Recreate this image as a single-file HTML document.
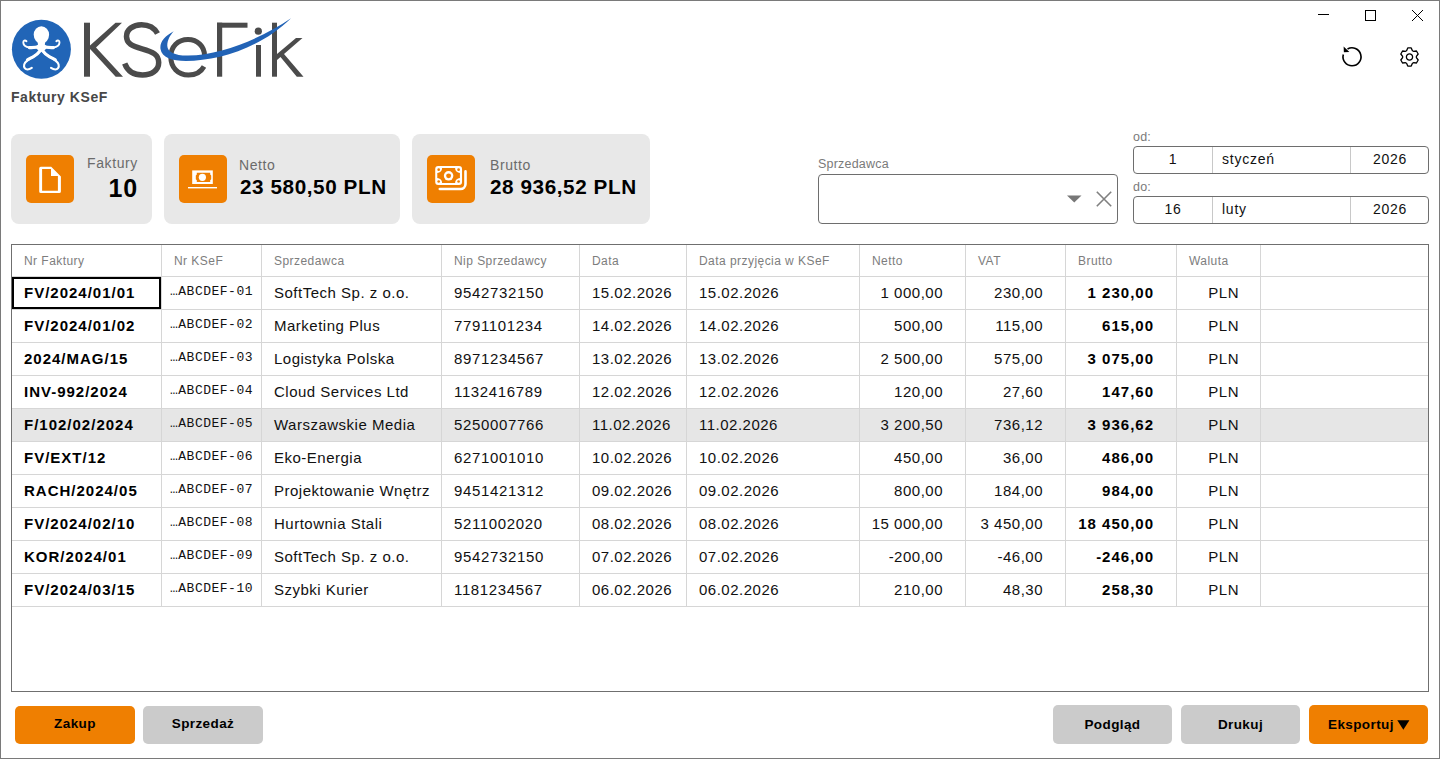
<!DOCTYPE html>
<html><head><meta charset="utf-8">
<style>
*{margin:0;padding:0;box-sizing:border-box}
html,body{width:1440px;height:759px;overflow:hidden;background:#fff}
body{font-family:"Liberation Sans",sans-serif;position:relative;color:#000}
.abs{position:absolute}
#win{position:absolute;left:0;top:0;width:1440px;height:759px;border:1px solid #7a7a7a}
.title{left:11px;top:89px;font-size:14px;font-weight:bold;color:#474747;letter-spacing:0.55px;white-space:nowrap}
.card{position:absolute;top:134px;height:90px;background:#e8e8e8;border-radius:8px}
.ico{position:absolute;top:21px;width:48px;height:48px;background:#ef7f01;border-radius:5px}
.clab{position:absolute;font-size:14px;color:#6b6b6b;white-space:nowrap;letter-spacing:0.6px}
.cval{position:absolute;font-size:20.7px;font-weight:bold;color:#000;white-space:nowrap;letter-spacing:0.58px}
.lbl{position:absolute;font-size:12.5px;color:#7a7a7a;white-space:nowrap;letter-spacing:0.2px}
.box{position:absolute;border:1px solid #6e6e6e;border-radius:4px;background:#fff}
.dtxt{position:absolute;font-size:14px;color:#111;white-space:nowrap;letter-spacing:0.75px;top:4px}
.dsep{position:absolute;top:0;width:1px;height:100%;background:#c8c8c8}
.btn{position:absolute;top:706px;height:38px;width:120px;border-radius:5px;background:#cbcbcb;font-size:13.5px;font-weight:bold;color:#000;text-align:center;line-height:38px;letter-spacing:0.4px}
.btn.or{background:#ef7f01}
.tb{position:absolute;border:1px solid #6f6f6f}
.hl{position:absolute;background:#e6e6e6}
.hline{position:absolute;left:12px;width:1416px;height:1px;background:#d6d6d6}
.vline{position:absolute;top:245px;width:1px;height:362px;background:#d6d6d6}
.th{position:absolute;top:254px;font-size:12px;color:#7d7d7d;white-space:nowrap;letter-spacing:0.45px}
.tr{position:absolute;left:0;width:1440px;height:33px}
.td{position:absolute;top:8px;font-size:15px;color:#111;white-space:nowrap;letter-spacing:0.5px}
.td.b{font-weight:bold;color:#000;letter-spacing:1px}
.td.m{font-family:"Liberation Mono",monospace;font-size:13px;top:8px}
.focus{position:absolute;left:12px;top:277px;width:149px;height:32px;border:2px solid #000}
</style></head><body>
<div id="win"></div>

<!-- logo -->
<svg class="abs" style="left:0;top:0" width="320" height="84" viewBox="0 0 320 84">
  <circle cx="41.4" cy="49.3" r="29.5" fill="#2165b7"/>
  <g id="oct" fill="#fff">
    <ellipse cx="41.4" cy="34.8" rx="7.7" ry="8.6"/>
    <path d="M37.2 40 L45.6 40 L44.8 44.5 L47.5 47.5 L43.5 51.2 L41.4 50.3 L39.3 51.2 L35.3 47.5 L38 44.5 Z"/>
  </g>
  <g fill="none" stroke="#fff" stroke-linecap="round">
    <g id="arms">
    <path d="M39 46.6 C35.5 47.6 32 48 29.5 47.6 C26 47 23.5 45.5 23.3 42.6 C23.2 40.6 25 39.8 26.5 41.2" stroke-width="1.9"/>
    <path d="M40 46.3 C36 47.5 32.5 47.9 29.5 47.6" stroke-width="3.2"/>
    <path d="M41 50 C38.5 53 36.5 55 33.5 56.6 C29 59 25.5 60.5 24.2 64.5 C23.4 67.5 25.3 69.5 27.5 69.5 C29 69.5 30.5 68.8 31.8 67.9" stroke-width="2.1"/>
    <path d="M41.3 49.5 C38.8 52.7 36.5 55 33.5 56.6 C31 58 29 58.8 27.5 59.8" stroke-width="3.1"/>
    </g>
    <g transform="translate(82.8 0) scale(-1 1)">
    <path d="M39 46.6 C35.5 47.6 32 48 29.5 47.6 C26 47 23.5 45.5 23.3 42.6 C23.2 40.6 25 39.8 26.5 41.2" stroke-width="1.9"/>
    <path d="M40 46.3 C36 47.5 32.5 47.9 29.5 47.6" stroke-width="3.2"/>
    <path d="M41 50 C38.5 53 36.5 55 33.5 56.6 C29 59 25.5 60.5 24.2 64.5 C23.4 67.5 25.3 69.5 27.5 69.5 C29 69.5 30.5 68.8 31.8 67.9" stroke-width="2.1"/>
    <path d="M41.3 49.5 C38.8 52.7 36.5 55 33.5 56.6 C31 58 29 58.8 27.5 59.8" stroke-width="3.1"/>
    </g>
  </g>
  <g fill="#4b4b4b">
    <!-- K -->
    <rect x="84" y="22.7" width="6" height="54"/>
    <path d="M115.5 22.7 L122 22.7 L96 47.5 L123 76.7 L115.7 76.7 L91.5 50.5 L90 49 L90 45.5 Z"/>
    <!-- i -->
    <circle cx="258.3" cy="31.2" r="3.6"/>
    <rect x="256" y="45" width="5" height="31.7"/>
    <!-- F -->
    <rect x="217" y="22.7" width="5.2" height="54"/>
    <rect x="217" y="22.7" width="30.5" height="5"/>
    <!-- k -->
    <rect x="272" y="22.7" width="5" height="54"/>
    <path d="M296 38 L302.5 38 L284 54 L303.5 76.7 L296.8 76.7 L280.5 57 L277 60 L277 54 Z"/>
  </g>
  <g fill="none" stroke="#4b4b4b">
    <!-- S -->
    <path d="M157.5 33.5 C154 27 148 24.7 141.5 24.7 C133 24.7 126.5 29.5 126.5 36.5 C126.5 43.5 132 46 142 48.8 C153 51.8 158.7 54.8 158.7 62.5 C158.7 70.5 151.5 75 142.5 75 C134 75 127.5 71 124.7 63.5" stroke-width="5.5"/>
    <!-- e -->
    <path d="M204 66.5 C201 72 195.5 75 188.5 75 C177.5 75 170.8 67 170.8 57 C170.8 46.5 178 39.5 188 39.5 C197.5 39.5 204.5 46.5 204.5 55.5" stroke-width="5"/>
  </g>
  <!-- swoosh -->
  <path fill="#2263b6" d="M173.7 31.3 C165 36 159.5 42 160.5 49 C161.8 57.5 172 61 186 61 C218 61 260 48.5 291 18.2 C260 39 222 54.8 188 55.6 C175 55.8 167.5 52 167.3 46 C167.1 40.5 170 35.5 173.7 31.3 Z"/>
</svg>
<div class="abs title">Faktury KSeF</div>

<!-- window controls -->
<svg class="abs" style="left:1300px;top:0" width="140" height="80" viewBox="1300 0 140 80">
  <g stroke="#000" stroke-width="1" fill="none">
    <line x1="1318" y1="14.5" x2="1329" y2="14.5"/>
    <rect x="1365.5" y="10.5" width="10" height="10"/>
    <line x1="1412" y1="10" x2="1423" y2="21"/>
    <line x1="1423" y1="10" x2="1412" y2="21"/>
  </g>
  <g stroke="#000" stroke-width="1.6" fill="none">
    <path d="M1347.5 49 A9 9 0 1 1 1343.3 54.5"/>
  </g>
  <path d="M1343.6 46.6 L1343.9 52.2 L1349.4 51.9 Z" fill="#000"/>
  <g transform="translate(1409.5 57)" fill="none" stroke="#000" stroke-width="1.3">
    <path d="M-2.94 -6.24 L-1.74 -9.03 L1.74 -9.03 L2.94 -6.24 A6.90 6.90 0 0 1 3.94 -5.67 L6.96 -6.02 L8.69 -3.01 L6.88 -0.58 A6.90 6.90 0 0 1 6.88 0.58 L8.69 3.01 L6.96 6.02 L3.94 5.67 A6.90 6.90 0 0 1 2.94 6.24 L1.74 9.03 L-1.74 9.03 L-2.94 6.24 A6.90 6.90 0 0 1 -3.94 5.67 L-6.96 6.02 L-8.69 3.01 L-6.88 0.58 A6.90 6.90 0 0 1 -6.88 -0.58 L-8.69 -3.01 L-6.96 -6.02 L-3.94 -5.67 A6.90 6.90 0 0 1 -2.94 -6.24 Z" stroke-linejoin="round"/>
    <circle r="3.1"/>
  </g>
</svg>

<!-- cards -->
<div class="card" style="left:11px;width:141px">
  <div class="ico" style="left:15px">
    <svg width="48" height="48" viewBox="0 0 48 48"><path fill-rule="evenodd" fill="#fff" d="M14.8 11.7 L25.2 11.7 L34.9 21.4 L34.9 36.4 Q34.9 38.1 33.2 38.1 L14.9 38.1 Q13.2 38.1 13.2 36.4 L13.2 13.4 Q13.2 11.7 14.8 11.7 Z M16.1 14.1 L25 14.1 L25 21 L31.9 21 L31.9 35.8 L16.1 35.8 Z"/></svg>
  </div>
  <div class="clab" style="left:76px;top:21px">Faktury</div>
  <div class="cval" style="right:14px;top:40px;font-size:25px;letter-spacing:0.8px">10</div>
</div>
<div class="card" style="left:164px;width:236px">
  <div class="ico" style="left:15px">
    <svg width="48" height="48" viewBox="0 0 48 48"><rect x="13.2" y="15.4" width="20.6" height="13.6" fill="#fff"/><path d="M17.8 17.8 L31.2 17.8 L31.2 19.5 L32.2 20.5 L32.2 24.2 L31.2 25.2 L31.2 27 L17.8 27 L17.8 25.2 L16.8 24.2 L16.8 20.5 L17.8 19.5 Z" fill="#ef7f01"/><circle cx="23.4" cy="22.3" r="3.6" fill="#fff"/><rect x="9" y="32" width="29" height="1.4" fill="#fff"/></svg>
  </div>
  <div class="clab" style="left:75px;top:23px">Netto</div>
  <div class="cval" style="left:76px;top:41px">23 580,50 PLN</div>
</div>
<div class="card" style="left:412px;width:238px">
  <div class="ico" style="left:15px">
    <svg width="48" height="48" viewBox="0 0 48 48"><rect x="8.2" y="11" width="26.85" height="19.1" rx="3" fill="#fff"/><path fill="#ef7f01" d="M15.1 13.1 L28.1 13.1 A4.9 4.9 0 0 0 32.9 18.1 L32.9 23.1 A4.9 4.9 0 0 0 28.1 28.1 L15.1 28.1 A4.9 4.9 0 0 0 10.3 23.1 L10.3 18.1 A4.9 4.9 0 0 0 15.1 13.1 Z"/><g fill="#ef7f01"><circle cx="11.7" cy="14.7" r="1.35"/><circle cx="31.6" cy="14.7" r="1.35"/><circle cx="11.7" cy="26.5" r="1.35"/><circle cx="31.6" cy="26.5" r="1.35"/></g><circle cx="21.6" cy="20.85" r="4.75" fill="#fff"/><circle cx="21.6" cy="20.85" r="2.45" fill="#ef7f01"/><path d="M12.8 34 L33.5 34 A5 5 0 0 0 38.5 29 L38.5 16.4" fill="none" stroke="#fff" stroke-width="2.6" stroke-linecap="round"/></svg>
  </div>
  <div class="clab" style="left:78px;top:23px">Brutto</div>
  <div class="cval" style="left:78px;top:41px">28 936,52 PLN</div>
</div>

<!-- seller combobox -->
<div class="lbl" style="left:818px;top:157px">Sprzedawca</div>
<div class="box" style="left:818px;top:174px;width:300px;height:50px">
  <svg class="abs" style="left:248px;top:20px" width="15" height="8" viewBox="0 0 15 8"><path d="M0 0.5 L14.5 0.5 L7.25 7.5 Z" fill="#777"/></svg>
  <svg class="abs" style="left:277px;top:16px" width="16" height="16" viewBox="0 0 16 16"><path d="M0.8 0.8 L15.2 15.2 M15.2 0.8 L0.8 15.2" stroke="#808080" stroke-width="1.6"/></svg>
</div>

<!-- dates -->
<div class="lbl" style="left:1133px;top:130px">od:</div>
<div class="box" style="left:1133px;top:146px;width:296px;height:28px">
  <div class="dsep" style="left:78px"></div><div class="dsep" style="left:216px"></div>
  <div class="dtxt" style="left:0;width:78px;text-align:center">1</div>
  <div class="dtxt" style="left:88px">styczeń</div>
  <div class="dtxt" style="left:217px;width:78px;text-align:center">2026</div>
</div>
<div class="lbl" style="left:1133px;top:180px">do:</div>
<div class="box" style="left:1133px;top:196px;width:296px;height:28px">
  <div class="dsep" style="left:78px"></div><div class="dsep" style="left:216px"></div>
  <div class="dtxt" style="left:0;width:78px;text-align:center">16</div>
  <div class="dtxt" style="left:88px">luty</div>
  <div class="dtxt" style="left:217px;width:78px;text-align:center">2026</div>
</div>

<!-- TABLE -->
<div class="tb" style="left:11px;top:244px;width:1418px;height:448px"></div>
<div class="hl" style="left:12px;top:408px;width:1416px;height:33px"></div>
<div class="hline" style="top:276px"></div>
<div class="hline" style="top:309px"></div>
<div class="hline" style="top:342px"></div>
<div class="hline" style="top:375px"></div>
<div class="hline" style="top:408px"></div>
<div class="hline" style="top:441px"></div>
<div class="hline" style="top:474px"></div>
<div class="hline" style="top:507px"></div>
<div class="hline" style="top:540px"></div>
<div class="hline" style="top:573px"></div>
<div class="hline" style="top:606px"></div>
<div class="vline" style="left:161px"></div>
<div class="vline" style="left:261px"></div>
<div class="vline" style="left:441px"></div>
<div class="vline" style="left:579px"></div>
<div class="vline" style="left:686px"></div>
<div class="vline" style="left:859px"></div>
<div class="vline" style="left:965px"></div>
<div class="vline" style="left:1065px"></div>
<div class="vline" style="left:1176px"></div>
<div class="vline" style="left:1260px"></div>
<div class="th" style="left:24px">Nr Faktury</div>
<div class="th" style="left:174px">Nr KSeF</div>
<div class="th" style="left:274px">Sprzedawca</div>
<div class="th" style="left:454px">Nip Sprzedawcy</div>
<div class="th" style="left:592px">Data</div>
<div class="th" style="left:699px">Data przyjęcia w KSeF</div>
<div class="th" style="left:872px">Netto</div>
<div class="th" style="left:978px">VAT</div>
<div class="th" style="left:1078px">Brutto</div>
<div class="th" style="left:1189px">Waluta</div>
<div class="tr" style="top:276px">
<div class="td b" style="left:24px">FV/2024/01/01</div>
<div class="td m" style="left:170px">…ABCDEF-01</div>
<div class="td" style="left:274px">SoftTech Sp. z o.o.</div>
<div class="td" style="left:454px;letter-spacing:0.65px">9542732150</div>
<div class="td" style="left:592px">15.02.2026</div>
<div class="td" style="left:699px">15.02.2026</div>
<div class="td r" style="right:497px">1 000,00</div>
<div class="td r" style="right:397px">230,00</div>
<div class="td r b" style="right:286px">1 230,00</div>
<div class="td r" style="right:201px">PLN</div>
</div>
<div class="tr" style="top:309px">
<div class="td b" style="left:24px">FV/2024/01/02</div>
<div class="td m" style="left:170px">…ABCDEF-02</div>
<div class="td" style="left:274px">Marketing Plus</div>
<div class="td" style="left:454px;letter-spacing:0.65px">7791101234</div>
<div class="td" style="left:592px">14.02.2026</div>
<div class="td" style="left:699px">14.02.2026</div>
<div class="td r" style="right:497px">500,00</div>
<div class="td r" style="right:397px">115,00</div>
<div class="td r b" style="right:286px">615,00</div>
<div class="td r" style="right:201px">PLN</div>
</div>
<div class="tr" style="top:342px">
<div class="td b" style="left:24px">2024/MAG/15</div>
<div class="td m" style="left:170px">…ABCDEF-03</div>
<div class="td" style="left:274px">Logistyka Polska</div>
<div class="td" style="left:454px;letter-spacing:0.65px">8971234567</div>
<div class="td" style="left:592px">13.02.2026</div>
<div class="td" style="left:699px">13.02.2026</div>
<div class="td r" style="right:497px">2 500,00</div>
<div class="td r" style="right:397px">575,00</div>
<div class="td r b" style="right:286px">3 075,00</div>
<div class="td r" style="right:201px">PLN</div>
</div>
<div class="tr" style="top:375px">
<div class="td b" style="left:24px">INV-992/2024</div>
<div class="td m" style="left:170px">…ABCDEF-04</div>
<div class="td" style="left:274px">Cloud Services Ltd</div>
<div class="td" style="left:454px;letter-spacing:0.65px">1132416789</div>
<div class="td" style="left:592px">12.02.2026</div>
<div class="td" style="left:699px">12.02.2026</div>
<div class="td r" style="right:497px">120,00</div>
<div class="td r" style="right:397px">27,60</div>
<div class="td r b" style="right:286px">147,60</div>
<div class="td r" style="right:201px">PLN</div>
</div>
<div class="tr" style="top:408px">
<div class="td b" style="left:24px">F/102/02/2024</div>
<div class="td m" style="left:170px">…ABCDEF-05</div>
<div class="td" style="left:274px">Warszawskie Media</div>
<div class="td" style="left:454px;letter-spacing:0.65px">5250007766</div>
<div class="td" style="left:592px">11.02.2026</div>
<div class="td" style="left:699px">11.02.2026</div>
<div class="td r" style="right:497px">3 200,50</div>
<div class="td r" style="right:397px">736,12</div>
<div class="td r b" style="right:286px">3 936,62</div>
<div class="td r" style="right:201px">PLN</div>
</div>
<div class="tr" style="top:441px">
<div class="td b" style="left:24px">FV/EXT/12</div>
<div class="td m" style="left:170px">…ABCDEF-06</div>
<div class="td" style="left:274px">Eko-Energia</div>
<div class="td" style="left:454px;letter-spacing:0.65px">6271001010</div>
<div class="td" style="left:592px">10.02.2026</div>
<div class="td" style="left:699px">10.02.2026</div>
<div class="td r" style="right:497px">450,00</div>
<div class="td r" style="right:397px">36,00</div>
<div class="td r b" style="right:286px">486,00</div>
<div class="td r" style="right:201px">PLN</div>
</div>
<div class="tr" style="top:474px">
<div class="td b" style="left:24px">RACH/2024/05</div>
<div class="td m" style="left:170px">…ABCDEF-07</div>
<div class="td" style="left:274px">Projektowanie Wnętrz</div>
<div class="td" style="left:454px;letter-spacing:0.65px">9451421312</div>
<div class="td" style="left:592px">09.02.2026</div>
<div class="td" style="left:699px">09.02.2026</div>
<div class="td r" style="right:497px">800,00</div>
<div class="td r" style="right:397px">184,00</div>
<div class="td r b" style="right:286px">984,00</div>
<div class="td r" style="right:201px">PLN</div>
</div>
<div class="tr" style="top:507px">
<div class="td b" style="left:24px">FV/2024/02/10</div>
<div class="td m" style="left:170px">…ABCDEF-08</div>
<div class="td" style="left:274px">Hurtownia Stali</div>
<div class="td" style="left:454px;letter-spacing:0.65px">5211002020</div>
<div class="td" style="left:592px">08.02.2026</div>
<div class="td" style="left:699px">08.02.2026</div>
<div class="td r" style="right:497px">15 000,00</div>
<div class="td r" style="right:397px">3 450,00</div>
<div class="td r b" style="right:286px">18 450,00</div>
<div class="td r" style="right:201px">PLN</div>
</div>
<div class="tr" style="top:540px">
<div class="td b" style="left:24px">KOR/2024/01</div>
<div class="td m" style="left:170px">…ABCDEF-09</div>
<div class="td" style="left:274px">SoftTech Sp. z o.o.</div>
<div class="td" style="left:454px;letter-spacing:0.65px">9542732150</div>
<div class="td" style="left:592px">07.02.2026</div>
<div class="td" style="left:699px">07.02.2026</div>
<div class="td r" style="right:497px">-200,00</div>
<div class="td r" style="right:397px">-46,00</div>
<div class="td r b" style="right:286px">-246,00</div>
<div class="td r" style="right:201px">PLN</div>
</div>
<div class="tr" style="top:573px">
<div class="td b" style="left:24px">FV/2024/03/15</div>
<div class="td m" style="left:170px">…ABCDEF-10</div>
<div class="td" style="left:274px">Szybki Kurier</div>
<div class="td" style="left:454px;letter-spacing:0.65px">1181234567</div>
<div class="td" style="left:592px">06.02.2026</div>
<div class="td" style="left:699px">06.02.2026</div>
<div class="td r" style="right:497px">210,00</div>
<div class="td r" style="right:397px">48,30</div>
<div class="td r b" style="right:286px">258,30</div>
<div class="td r" style="right:201px">PLN</div>
</div>
<div class="focus"></div>
<!-- buttons -->
<div class="btn or" style="left:15px;line-height:36px">Zakup</div>
<div class="btn" style="left:143px;line-height:36px">Sprzedaż</div>
<div class="btn" style="left:1053px;top:705px;height:39px;width:119px;line-height:40px">Podgląd</div>
<div class="btn" style="left:1181px;top:705px;height:39px;width:119px;line-height:40px">Drukuj</div>
<div class="btn or" style="left:1309px;top:705px;height:39px;width:119px;line-height:40px;text-align:left"><span class="abs" style="left:19px;top:0">Eksportuj</span><svg class="abs" style="left:88px;top:15px" width="13" height="10" viewBox="0 0 13 10"><path d="M0.3 0.2 L12.4 0.2 L6.35 9.8 Z" fill="#000"/></svg></div>
</body></html>
